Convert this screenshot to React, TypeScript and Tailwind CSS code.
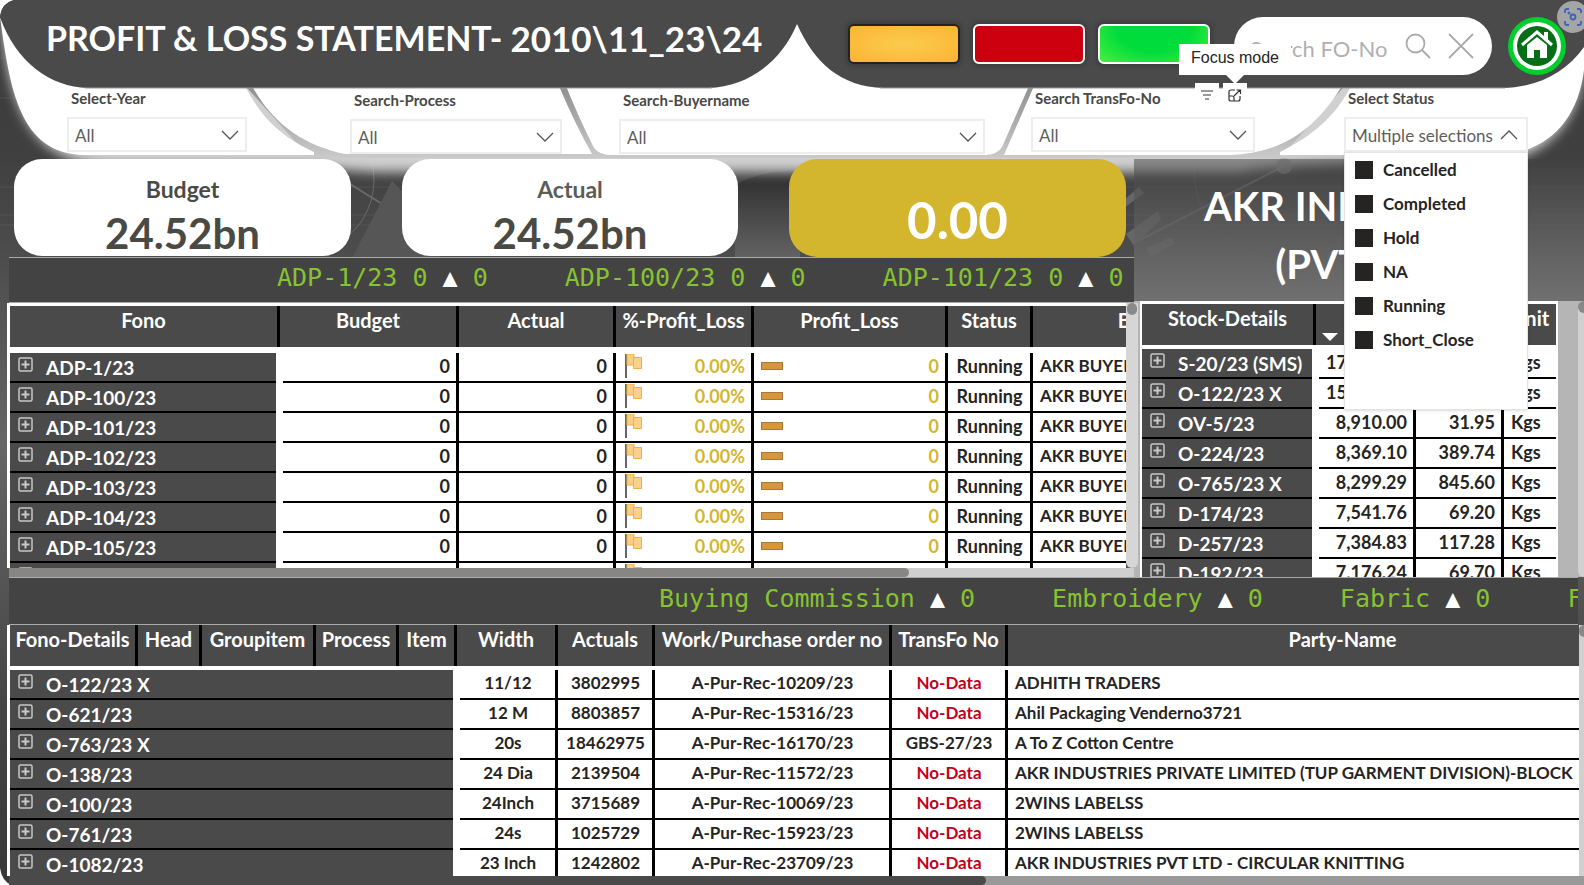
import React from "react";

const flowRows = ["ADP-1/23", "ADP-100/23", "ADP-101/23", "ADP-102/23", "ADP-103/23", "ADP-104/23", "ADP-105/23", "ADP-106/23"];

const stockRows = [
  ["S-20/23 (SMS)", "17,204.50", "112.40", "Kgs"],
  ["O-122/23 X", "15,118.20", "204.15", "Kgs"],
  ["OV-5/23", "8,910.00", "31.95", "Kgs"],
  ["O-224/23", "8,369.10", "389.74", "Kgs"],
  ["O-765/23 X", "8,299.29", "845.60", "Kgs"],
  ["D-174/23", "7,541.76", "69.20", "Kgs"],
  ["D-257/23", "7,384.83", "117.28", "Kgs"],
  ["D-192/23", "7,176.24", "69.70", "Kgs"],
];

const detailRows = [
  ["O-122/23 X", "11/12", "3802995", "A-Pur-Rec-10209/23", "No-Data", "ADHITH TRADERS"],
  ["O-621/23", "12 M", "8803857", "A-Pur-Rec-15316/23", "No-Data", "Ahil Packaging Venderno3721"],
  ["O-763/23 X", "20s", "18462975", "A-Pur-Rec-16170/23", "GBS-27/23", "A To Z Cotton Centre"],
  ["O-138/23", "24 Dia", "2139504", "A-Pur-Rec-11572/23", "No-Data", "AKR INDUSTRIES PRIVATE LIMITED (TUP GARMENT DIVISION)-BLOCK"],
  ["O-100/23", "24Inch", "3715689", "A-Pur-Rec-10069/23", "No-Data", "2WINS LABELSS"],
  ["O-761/23", "24s", "1025729", "A-Pur-Rec-15923/23", "No-Data", "2WINS LABELSS"],
  ["O-1082/23", "23 Inch", "1242802", "A-Pur-Rec-23709/23", "No-Data", "AKR INDUSTRIES PVT LTD - CIRCULAR KNITTING"],
];

const statuses = ["Cancelled", "Completed", "Hold", "NA", "Running", "Short_Close"];

function Backdrop() {
  return (
    <svg className="absolute inset-0 h-full w-full" viewBox="0 0 1584 885" preserveAspectRatio="none" aria-hidden="true">
      <defs>
        <linearGradient id="page" x1="0" y1="0" x2="0" y2="1">
          <stop offset="0" stopColor="#3a3a3a" />
          <stop offset="0.18" stopColor="#404040" />
          <stop offset="0.3" stopColor="#4e4e4e" />
          <stop offset="0.5" stopColor="#666" />
          <stop offset="0.8" stopColor="#454545" />
          <stop offset="1" stopColor="#383838" />
        </linearGradient>
        <linearGradient id="dim" x1="0" y1="0" x2="0" y2="1">
          <stop offset="0" stopColor="#2c2c2c" />
          <stop offset="1" stopColor="#636363" />
        </linearGradient>
        <linearGradient id="fold" x1="0" y1="0" x2="0" y2="1">
          <stop offset="0" stopColor="#8a8a8a" />
          <stop offset="1" stopColor="#cacaca" />
        </linearGradient>
        <filter id="soft" x="-5%" y="-30%" width="110%" height="160%">
          <feGaussianBlur stdDeviation="6" />
        </filter>
      </defs>
      <rect width="1584" height="885" fill="url(#page)" />
      <g stroke="#6a6a6a" strokeWidth="1" fill="none">
        <path d="M0 58H1584M0 98H1584M0 187H1584M0 215H1584M0 225H1584" opacity="0.35" />
        <path d="M350 184L440 240M1134 243L1284 166" strokeWidth="2" />
        <circle cx="300" cy="180" r="74" />
        <circle cx="1284" cy="170" r="90" opacity="0.5" />
      </g>
      <path d="M352 258L392 181L440 230V258z" fill="#565656" />
      <path d="M735 185Q760 170 800 171V258H735z" fill="url(#dim)" />
      <path d="M1124 200L1139 187L1144 193L1124 208zM1126 234L1158 211L1161 219L1134 246zM1146 249L1171 237L1175 243L1152 256z" fill="#666" />
      <path d="M2 30C10 90 22 164 110 166H320Q345 172 400 172H1240Q1290 162 1500 162Q1572 150 1584 70V20H2z" fill="#d0d0d0" filter="url(#soft)" />
      <circle cx="1284" cy="166" r="8" fill="#999" opacity="0.6" />
      <path d="M240 80H1350L1280 158H310z" fill="url(#fold)" />
      <path d="M0 17C10 90 20 154 84 155H314V152C280 136 262 118 245 86H84Q20 70 0 17z" fill="#fff" />
      <path d="M252 86C274 126 306 146 345 154H592Q575 124 559 86z" fill="#fff" />
      <path d="M566 86Q578 116 594 148Q600 155 610 155H986Q998 154 1002 147L1029 86L840 20H770z" fill="#fff" />
      <path d="M1034 86L1004 155H1230C1284 153 1316 128 1342 86z" fill="#fff" />
      <path d="M1351 86C1336 116 1312 136 1280 152V155H1500C1548 152 1578 120 1584 70V40L1490 86z" fill="#fff" />
      <path d="M0 0H14Q2 3 0 16z" fill="#fff" />
      <path d="M14 0Q2 3 0 17C16 62 50 87 88 88H708C750 87 782 60 797 24C814 62 840 87 884 88H1502C1540 87 1566 72 1584 47V0z" fill="#4a4a4a" />
      <path d="M85 88H712M880 88H1505" stroke="#999" strokeWidth="1" />
      <path d="M0 868Q2 882 12 885H0z" fill="#fff" />
    </svg>
  );
}

function Chevron({ up = false }: { up?: boolean }) {
  return (
    <svg className="pointer-events-none absolute top-1/2 right-2 h-2.5 w-[18px] -translate-y-1/2" viewBox="0 0 18 10" fill="none" stroke="#555" strokeWidth="1.3" aria-hidden="true">
      <path d={up ? "M1 9L9 1L17 9" : "M1 1L9 9L17 1"} />
    </svg>
  );
}

function Slicer({ id, label, className }: { id: string; label: string; className: string }) {
  return (
    <div className={`flex flex-col gap-[9px] ${className}`}>
      <label htmlFor={id} className="pl-1 text-[15px] leading-5 font-bold text-[#484844]">{label}</label>
      <div className="relative">
        <select id={id} className="block h-[35px] w-full appearance-none border-2 border-[#eee] bg-white pt-0.5 pl-1.5 text-[17px] text-[#605e5c]">
          <option>All</option>
        </select>
        <Chevron />
      </div>
    </div>
  );
}

function Card({ title, value, tone }: { title: string; value: string; tone: string }) {
  return (
    <div className="flex h-[97px] flex-col items-center rounded-[28px] bg-white pt-4 text-[#4a4a45]">
      <h2 className={`text-[23px] leading-7 font-bold ${tone}`}>{title}</h2>
      <p className="text-[42px] leading-[60px] font-bold">{value}</p>
    </div>
  );
}

function Plus() {
  return (
    <button aria-label="Expand" className="mb-1.5 h-[15px] w-[15px] shrink-0">
      <svg viewBox="0 0 15 15" fill="none" stroke="#c8c8c8" strokeWidth="1.5" aria-hidden="true">
        <rect x="1" y="1" width="13" height="13" rx="1.5" />
        <path d="M3.5 7.5H11.5M7.5 3.5V11.5" strokeWidth="2" />
      </svg>
    </button>
  );
}

function RowHead({ text, span = 1 }: { text: string; span?: number }) {
  return (
    <th scope="row" colSpan={span} className="p-0 pr-[7px]">
      <div className="flex h-[30px] items-center gap-[13px] border-b-2 border-black bg-[#4a4a4a] pt-px pl-2 text-left text-[19px] leading-[26px] font-bold whitespace-nowrap text-white">
        <Plus />
        {text}
      </div>
    </th>
  );
}

function Flag() {
  return (
    <svg className="ml-0.5 h-6 w-[18px]" viewBox="0 0 18 24" aria-hidden="true">
      <path d="M1 0V24" stroke="#333" strokeWidth="1.5" />
      <path d="M2 0H9V11H2z" fill="#f8cd86" stroke="#f5ad45" />
      <path d="M8.5 3.5H16.5V14.5H8.5z" fill="#fbd08a" stroke="#f5ad45" />
    </svg>
  );
}

function Cell({ children, className = "", last = false }: { children?: React.ReactNode; className?: string; last?: boolean }) {
  return (
    <td className={`h-[30px] overflow-hidden border-b-2 border-black pr-1.5 pb-[3px] pl-[7px] leading-6 whitespace-nowrap ${last ? "" : "border-r-[3px]"} ${className}`}>
      {children}
    </td>
  );
}

function Head({ children, className = "", last = false }: { children?: React.ReactNode; className?: string; last?: boolean }) {
  return (
    <th scope="col" className="border-b-4 border-white p-0">
      <div className={`relative h-[41px] border-black bg-[#4a4a4a] pt-0.5 text-[20px] leading-6 font-bold whitespace-nowrap text-white ${last ? "" : "border-r-[3px]"} ${className}`}>{children}</div>
    </th>
  );
}

function Ticker({ items, className }: { items: string[]; className: string }) {
  return (
    <div className={`flex items-center gap-[77px] overflow-hidden border-t border-b border-[#aaa] bg-[#434343] pb-1 font-['DejaVu_Sans_Mono',monospace] text-[25px] leading-8 whitespace-nowrap text-[#86c232] ${className}`}>
      {items.map((item) => {
        const [before, after] = item.split("▲");
        return (
          <p key={item} className="whitespace-pre">
            {before}
            {after !== undefined && <span className="text-white">▲</span>}
            {after}
          </p>
        );
      })}
    </div>
  );
}

function Cols({ widths }: { widths: number[] }) {
  return (
    <colgroup>
      {widths.map((w, i) => (
        <col key={i} style={{ width: w }} />
      ))}
    </colgroup>
  );
}

function TopBar() {
  return (
    <header className="flex h-[88px] items-center pr-[18px] pl-[46px]">
      <h1 className="mb-3 flex flex-1 items-center gap-2 leading-[48px] font-bold whitespace-nowrap text-white">
        <span className="text-[34px]">PROFIT &amp; LOSS STATEMENT-</span>
        <span className="text-[35px]">2010\11_23\24</span>
      </h1>
      <div className="flex gap-[13px]">
        <button aria-label="Amber" className="h-10 w-28 rounded-md border-2 border-[#222] bg-radial from-[#fbcb4e] to-[#fbb432] shadow-[0_0_4px_2px_#3c3c3c]" />
        <button aria-label="Red" className="h-10 w-28 rounded-md border-2 border-white bg-[#cc000f] shadow-[0_0_4px_2px_#3c3c3c]" />
        <button aria-label="Green" className="h-10 w-28 rounded-md border-2 border-white bg-radial-[at_50%_0%] from-[#00dc3c] from-50% to-[#48f03c] shadow-[0_0_4px_2px_#3c3c3c]" />
      </div>
      <div className="relative mt-1 ml-6 flex h-[58px] w-[258px] items-center rounded-full bg-white pr-[18px] pl-4">
        <input aria-label="Search FO-No" placeholder="Search FO-No" className="min-w-0 flex-1 bg-transparent pt-1 text-[22px] text-[#aaa] outline-none placeholder:text-[#b0b0b0]" />
        <button aria-label="Search">
          <svg className="h-[26px] w-[26px]" viewBox="0 0 26 26" fill="none" stroke="#aaa" strokeWidth="1.8" aria-hidden="true">
            <circle cx="10.5" cy="10.5" r="9" />
            <path d="M17 17L25 25" />
          </svg>
        </button>
        <button aria-label="Clear" className="ml-[17px]">
          <svg className="h-[26px] w-[26px]" viewBox="0 0 26 26" stroke="#aaa" strokeWidth="1.8" aria-hidden="true">
            <path d="M1 1L25 25M25 1L1 25" />
          </svg>
        </button>
        <div role="tooltip" className="absolute top-[27px] -left-[55px] z-20 h-[31px] w-[112px] bg-white text-center font-['Liberation_Sans',sans-serif] text-[16px] leading-[28px] text-[#252423]">
          Focus mode
          <svg className="absolute top-[30px] left-[46px] h-2.5 w-5" viewBox="0 0 20 10" aria-hidden="true">
            <path d="M0 0H20L10 10z" fill="#fff" />
          </svg>
        </div>
      </div>
      <button aria-label="Home" className="mt-1 ml-4 h-[58px] w-[58px]">
        <svg viewBox="0 0 58 58" aria-hidden="true">
          <circle cx="29" cy="29" r="29" fill="#00cf2c" />
          <circle cx="29" cy="29" r="24" fill="#fff" />
          <circle cx="29" cy="29" r="20" fill="#056e16" />
          <path d="M14 28L29 15L44 28" fill="none" stroke="#fff" strokeWidth="3" />
          <path d="M36 15H40V24L36 20z" fill="#fff" />
          <path d="M19 28L29 20L39 28V41H32V33H26V41H19z" fill="#fff" />
        </svg>
      </button>
    </header>
  );
}

function StatusSlicer() {
  return (
    <div className="relative z-10 flex w-[184px] flex-col gap-[9px]">
      <span id="status-label" className="pl-1 text-[15px] leading-5 font-bold text-[#484844]">Select Status</span>
      <button aria-labelledby="status-label" aria-expanded="true" className="relative h-[35px] border-2 border-[#eee] bg-white pt-0.5 pl-1.5 text-left text-[17px] text-[#605e5c]">
        Multiple selections
        <Chevron up />
      </button>
      <ul className="absolute top-[64px] left-0 h-[258px] w-full border border-[#e4e4e4] bg-white shadow-sm">
        {statuses.map((s) => (
          <li key={s} className="flex h-[34px] items-center">
            <label className="flex items-center gap-2.5 pl-2.5 text-[17px] leading-5 font-bold text-[#252423]">
              <input type="checkbox" className="h-[18px] w-[18px] appearance-none bg-[#252423]" />
              {s}
            </label>
          </li>
        ))}
      </ul>
    </div>
  );
}

export default function App() {
  return (
    <div className="relative flex min-h-screen flex-col overflow-hidden font-[Lato,'Noto_Sans',sans-serif]">
      <Backdrop />
      <button aria-label="Visual search" className="absolute top-px right-[-5px] z-20 h-8 w-8 rounded-full bg-[#a5a5a5]">
        <svg viewBox="0 0 32 32" fill="none" stroke="#3c64b4" strokeWidth="1.8" aria-hidden="true">
          <path d="M8 12V10Q8 8 10 8H12M20 8H22Q24 8 24 10V12M24 20V22Q24 24 22 24H20M12 24H10Q8 24 8 22V20" />
          <circle cx="16" cy="16" r="2.5" />
          <circle cx="12" cy="12" r="0.6" />
        </svg>
      </button>

      <div className="relative flex flex-1 flex-col">
        <TopBar />

        <div className="grid h-[71px] grid-cols-[283fr_269fr_412fr_313fr_240fr] items-start pl-[67px]">
          <Slicer id="year" label="Select-Year" className="w-[180px]" />
          <Slicer id="process" label="Search-Process" className="mt-0.5 w-[212px]" />
          <Slicer id="buyer" label="Search-Buyername" className="mt-0.5 w-[366px]" />
          <div className="relative w-[224px]">
            <Slicer id="transfo" label="Search TransFo-No" className="w-full" />
            <div className="absolute -top-[5px] right-2 flex gap-1">
              <button aria-label="Filters" className="h-6 w-6 bg-white">
                <svg viewBox="0 0 24 24" fill="none" stroke="#333" strokeWidth="1.2" aria-hidden="true">
                  <path d="M6 8H18M8 12H16M10 16H14" />
                </svg>
              </button>
              <button aria-label="Focus mode" className="h-6 w-6 bg-white">
                <svg viewBox="0 0 24 24" fill="none" stroke="#333" strokeWidth="1.2" aria-hidden="true">
                  <path d="M12 7H8Q6 7 6 9V16Q6 18 8 18H15Q17 18 17 16V13M6 13H9Q11 13 11 15V18M11 13L17 7M13.5 7H17.5V11" />
                </svg>
              </button>
            </div>
          </div>
          <StatusSlicer />
        </div>

        <div className="grid grid-cols-[1134fr_450fr]">
          <section className="min-w-0">
            <div className="grid h-[98px] grid-cols-[337fr_336fr_337fr] gap-x-[51px] pr-2 pl-[14px]">
              <Card title="Budget" value="24.52bn" tone="text-[#4a4a45]" />
              <Card title="Actual" value="24.52bn" tone="text-[#5c5c58]" />
              <div className="flex h-[98px] items-center justify-center rounded-[28px] bg-[#d4b52e] pt-6 text-[51px] font-bold text-white">0.00</div>
            </div>
            <Ticker className="ml-[9px] h-[46px] pl-[268px]" items={["ADP-1/23 0 ▲ 0", "ADP-100/23 0 ▲ 0", "ADP-101/23 0 ▲ 0"]} />
            <div className="relative z-[1] -mr-1 ml-[7px] flex">
              <div className="h-[265px] min-w-0 flex-1 overflow-hidden bg-white pt-[3px] pl-[3px]">
                <table className="w-[1245px] table-fixed border-separate border-spacing-0 text-[18px] font-bold text-[#252423] [&_thead_th]:border-b-[6px]">
                  <Cols widths={[273, 176, 157, 138, 194, 85, 222]} />
                  <thead>
                    <tr>
                      <Head className="mr-[3px]">Fono</Head>
                      <Head className="-ml-[3px]">Budget</Head>
                      <Head>Actual</Head>
                      <Head>%-Profit_Loss</Head>
                      <Head>Profit_Loss</Head>
                      <Head>Status</Head>
                      <Head last>Buyer</Head>
                    </tr>
                  </thead>
                  <tbody>
                    {flowRows.map((r) => (
                      <tr key={r}>
                        <RowHead text={r} />
                        <Cell className="text-right">0</Cell>
                        <Cell className="text-right">0</Cell>
                        <Cell className="text-[#d4b52e]">
                          <span className="flex items-center justify-between"><Flag />0.00%</span>
                        </Cell>
                        <Cell className="text-[#d4b52e]">
                          <span className="flex items-center justify-between">
                            <span className="h-2 w-[22px] border border-[#a87838] bg-[#d6963a]" />0
                          </span>
                        </Cell>
                        <Cell className="text-center">Running</Cell>
                        <Cell last className="text-[17px]">AKR BUYER</Cell>
                      </tr>
                    ))}
                  </tbody>
                </table>
              </div>
              <div className="w-3 rounded-b-md bg-[#d6d6d6]"><div className="mx-auto h-3 w-2.5 rounded-full bg-[#8a8a8a]" /></div>
            </div>
            <div className="ml-[9px] h-[9px] bg-[#cfcfcf]"><div className="h-full w-4/5 rounded-r-md bg-[#878683]" /></div>
          </section>

          <section className="flex min-w-0 flex-col">
            <div className="h-[142px] bg-linear-to-b from-[#404040]/50 to-[#707070] pt-[18px] pl-3 text-center text-[40px] leading-[58px] font-bold text-white">
              <h2>AKR INDUSTRIES<br />(PVT) LTD</h2>
            </div>
            <div className="flex h-[276px] justify-between overflow-hidden bg-[#b5b5b5] pl-[6px]">
              <div className="w-[418px] overflow-hidden bg-white pt-[3px] pl-0.5">
                <table className="w-[414px] table-fixed border-separate border-spacing-0 text-[18px] font-bold text-[#252423]">
                  <Cols widths={[177, 97, 88, 52]} />
                  <thead>
                    <tr>
                      <Head className="mr-[3px]">Stock-Details</Head>
                      <Head className="-ml-[3px]">
                        Qty
                        <svg className="absolute bottom-1 left-1.5 h-2 w-4" viewBox="0 0 16 8" aria-hidden="true"><path d="M0 0H16L8 8z" fill="#fff" /></svg>
                      </Head>
                      <Head>Rate</Head>
                      <Head last>Unit</Head>
                    </tr>
                  </thead>
                  <tbody>
                    {stockRows.map(([name, qty, rate, unit]) => (
                      <tr key={name}>
                        <RowHead text={name} />
                        <Cell className="text-right">{qty}</Cell>
                        <Cell className="text-right">{rate}</Cell>
                        <Cell last>{unit}</Cell>
                      </tr>
                    ))}
                  </tbody>
                </table>
              </div>
              <div className="w-1.5 rounded-l-md bg-[#d0d0d0]"><div className="h-3 w-2 rounded-l-full bg-[#888]" /></div>
            </div>
          </section>
        </div>

        <Ticker className="mr-1.5 ml-[9px] h-12 pl-[650px]" items={["Buying Commission ▲ 0", "Embroidery ▲ 0", "Fabric ▲ 0", "Freight"]} />

        <div className="ml-[7px] flex">
          <div className="h-[251px] min-w-0 flex-1 overflow-hidden bg-white pl-[3px]">
            <table className="w-[1667px] table-fixed border-separate border-spacing-0 text-[17px] font-bold text-[#252423]">
              <Cols widths={[128, 64, 114, 83, 61, 98, 97, 237, 116, 669]} />
              <thead>
                <tr>
                  <Head>Fono-Details</Head>
                  <Head>Head</Head>
                  <Head>Groupitem</Head>
                  <Head>Process</Head>
                  <Head className="mr-[3px]">Item</Head>
                  <Head className="-ml-[3px]">Width</Head>
                  <Head>Actuals</Head>
                  <Head>Work/Purchase order no</Head>
                  <Head>TransFo No</Head>
                  <Head last>Party-Name</Head>
                </tr>
              </thead>
              <tbody>
                {detailRows.map(([name, width, actual, order, trans, party]) => (
                  <tr key={name}>
                    <RowHead text={name} span={5} />
                    <Cell className="text-center">{width}</Cell>
                    <Cell className="text-center">{actual}</Cell>
                    <Cell className="text-center">{order}</Cell>
                    <Cell className={trans === "No-Data" ? "text-center text-[#c4001a]" : "text-center"}>{trans}</Cell>
                    <Cell last>{party}</Cell>
                  </tr>
                ))}
              </tbody>
            </table>
          </div>
          <div className="w-[5px] bg-[#d0d0d0]"><div className="h-3 rounded-l-full bg-[#888]" /></div>
        </div>
        <div className="ml-[9px] h-[9px] bg-[#999]"><div className="h-full w-[62%] rounded-r-md bg-[#4a4a4a]" /></div>
      </div>
    </div>
  );
}
